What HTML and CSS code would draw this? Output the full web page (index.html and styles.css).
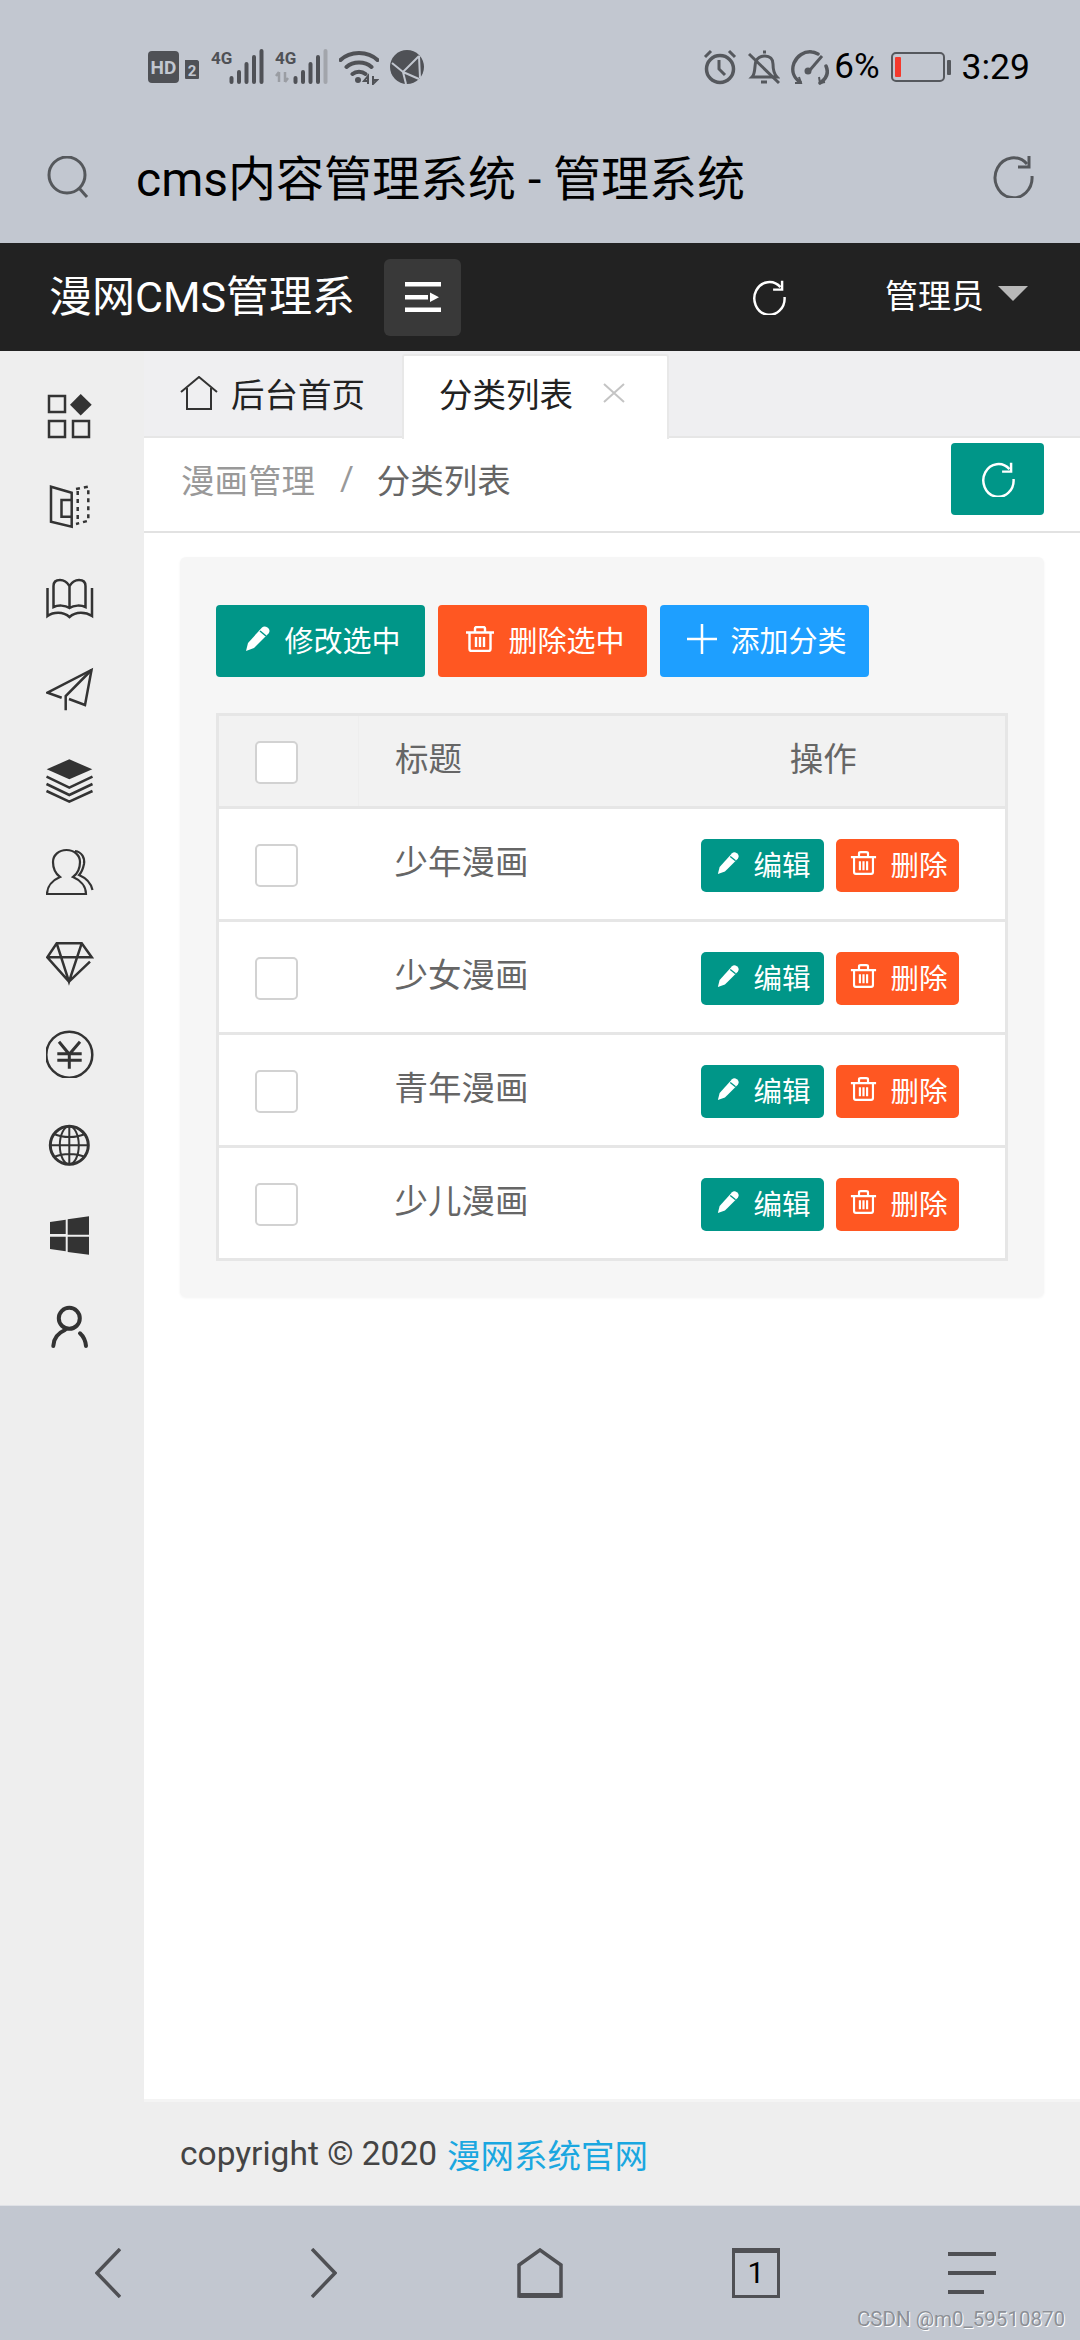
FILE: index.html
```html
<!DOCTYPE html>
<html lang="zh-CN">
<head>
    <meta charset="UTF-8">
    <meta name="viewport" content="width=device-width, initial-scale=1.0">
    <title>cms内容管理系统 - 管理系统</title>
    <link rel="stylesheet" href="styles.css">
</head>
<body>
    <svg class="defs" aria-hidden="true">
        <symbol id="i-reload" viewBox="0 0 44 44">
            <path d="M36 10A18.5 20 0 1 0 41 22" fill="none" stroke="currentColor" stroke-width="3"/>
            <path d="M38 2V13H27" fill="none" stroke="currentColor" stroke-width="3"/>
        </symbol>
        <symbol id="i-pencil" viewBox="0 0 26 26">
            <path d="M1 25L3 17L17 1.5C18.5 0 20.5 0 22.5 1.5C25 3.5 25 5.5 23.5 7.5L9 22Z" fill="currentColor"/>
            <path d="M15 5L21 10" stroke="#009688" stroke-width="1.5"/>
        </symbol>
        <symbol id="i-trash" viewBox="0 0 30 26">
            <path d="M1 6.5H29M10 6V2.5C10 1.5 11 1 12 1H18C19 1 20 1.5 20 2.5V6M4.500 7V23C4.500 24 5.500 25 6.500 25H23.500C24.500 25 25.500 24 25.500 23V7M11 11V21M15 11V21M19 11V21" fill="none" stroke="currentColor" stroke-width="2.400"/>
        </symbol>
    </svg>

    <div class="top">
        <div class="status">
            <div class="status-left">
                <svg width="52" height="36" viewBox="0 0 52 36">
                    <rect x="0" y="2" width="31" height="32" rx="4" fill="#4f5156"/>
                    <text x="15.500" y="25" class="st-hd">HD</text>
                    <path d="M37 11H49C50 11 51 12 51 13V29C51 30 50 30 49 30H39C38 30 37 30 37 29Z" fill="#4f5156"/>
                    <text x="44" y="27" class="st-sim">2</text>
                </svg>
                <svg width="53" height="36" viewBox="0 0 53 36">
                    <text x="0" y="15" class="st-4g">4G</text>
                    <g stroke="#4f5156" stroke-width="4" stroke-linecap="round">
                        <path d="M20.500 29V33M28 23V33M35.500 15V33M43 8V33M50.500 2V33"/>
                    </g>
                </svg>
                <svg width="53" height="36" viewBox="0 0 53 36">
                    <text x="0" y="15" class="st-4g">4G</text>
                    <path d="M4 33V23M4 23L1 27M10 23V33M10 33L13 29" stroke="#9a9da3" stroke-width="2.500" fill="none"/>
                    <g stroke="#4f5156" stroke-width="4" stroke-linecap="round">
                        <path d="M20.500 29V33M28 23V33M35.500 15V33M43 8V33"/>
                    </g>
                    <path d="M50.500 2V33" stroke="#a2a5ab" stroke-width="4" stroke-linecap="round"/>
                </svg>
                <svg width="40" height="36" viewBox="0 0 40 36">
                    <path d="M1.500 11C11 1.500 29 1.500 38.500 11M7.500 18C14 12 26 12 32.500 18M13.500 25C17 22 23 22 26.500 25" fill="none" stroke="#4f5156" stroke-width="4" stroke-linecap="round"/>
                    <circle cx="19" cy="31" r="3" fill="#4f5156"/>
                    <path d="M29 35V27L25 32H29M34 27V35L38 31H34" fill="none" stroke="#4f5156" stroke-width="2"/>
                </svg>
                <svg width="34" height="36" viewBox="0 0 34 36">
                    <circle cx="17" cy="18" r="17" fill="#4f5156"/>
                    <path d="M2 14L13 23L29 7M13 23L16 35M13 23L29 30M29 7L30 29" fill="none" stroke="#c2c7d0" stroke-width="2"/>
                </svg>
            </div>
            <div class="status-right">
                <svg width="34" height="36" viewBox="0 0 34 36">
                    <circle cx="17" cy="20" r="13.500" fill="none" stroke="#55585d" stroke-width="3.500"/>
                    <path d="M16 11V20L22 26M2 8L8 2M32 8L26 2" fill="none" stroke="#55585d" stroke-width="3"/>
                </svg>
                <svg width="32" height="36" viewBox="0 0 32 36">
                    <path d="M4 28C8 24 6 17 8 12C10 8 13 7 17 7C22 7 25 10 25 15C25 21 26 25 29 28H4ZM13 33H19M15 3H18" fill="none" stroke="#55585d" stroke-width="3"/>
                    <path d="M1 5L31 34" stroke="#55585d" stroke-width="3"/>
                </svg>
                <svg width="38" height="36" viewBox="0 0 38 36">
                    <path d="M9 33C3 29 0 22 3 14C6 7 13 2 21 3C23 3 25 4 27 5M35 17C38 24 35 30 29 34" fill="none" stroke="#55585d" stroke-width="3.500" stroke-linecap="round"/>
                    <path d="M31 7L19 21" stroke="#55585d" stroke-width="3"/>
                    <circle cx="17" cy="22" r="3.500" fill="#55585d"/>
                    <path d="M8 28L10 34L4 34M28 28L29 34L34 33" fill="none" stroke="#55585d" stroke-width="2"/>
                </svg>
                <span class="pct">6%</span>
                <svg class="batt" width="60" height="30" viewBox="0 0 60 30">
                    <rect x="1" y="1" width="52" height="28" rx="4" fill="none" stroke="#55585d" stroke-width="2"/>
                    <rect x="4" y="5" width="6" height="20" rx="1" fill="#f4392d"/>
                    <rect x="56" y="8" width="4" height="15" rx="1" fill="#55585d"/>
                </svg>
                <span class="clock">3:29</span>
            </div>
        </div>
        <div class="addr">
            <svg class="addr-search" width="42" height="42" viewBox="0 0 42 42">
                <circle cx="20" cy="19" r="18" fill="none" stroke="#55585c" stroke-width="3"/>
                <path d="M32 32L40 41" stroke="#55585c" stroke-width="3"/>
            </svg>
            <span class="addr-text">cms内容管理系统 - 管理系统</span>
            <svg class="addr-reload" width="44" height="44"><use href="#i-reload"/></svg>
        </div>
    </div>

    <div class="header">
        <span class="brand">漫网CMS管理系</span>
        <div class="flex-btn">
            <svg width="36" height="30" viewBox="0 0 36 30">
                <path d="M0 0H36V4.500H0ZM0 13H23V17.500H0ZM0 25.500H36V30H0Z" fill="#fff"/>
                <path d="M25 10.500L34 15.300L25 20Z" fill="#fff"/>
            </svg>
        </div>
        <svg class="head-reload" width="36" height="36"><use href="#i-reload"/></svg>
        <span class="admin">管理员</span>
        <span class="caret"></span>
    </div>

    <div class="body">
        <div class="side">
            <div class="side-item"><svg width="48" height="48" viewBox="0 0 48 48" fill="none" stroke="#333" stroke-width="2.500">
                <rect x="3" y="4" width="16" height="16"/><rect x="3" y="29" width="16" height="16"/><rect x="27" y="29" width="16" height="16"/>
                <path d="M34.700 2L45.700 12.700L34.700 23.500L24 12.700Z" fill="#333" stroke="none"/>
            </svg></div>
            <div class="side-item"><svg width="48" height="48" viewBox="0 0 48 48" fill="none" stroke="#333" stroke-width="2.500">
                <path d="M25.700 9.700L5 3.700V38.700L25.700 43.700Z"/>
                <path d="M25.700 17H15.500V33.700H25.700"/>
                <path d="M30 6L42.300 3.700V37.700L30 41M31.700 8V40" stroke-dasharray="4 4"/>
            </svg></div>
            <div class="side-item"><svg width="48" height="48" viewBox="0 0 48 48" fill="none" stroke="#333" stroke-width="2.500">
                <path d="M23.500 12C21 8 17 6 14 6C10 6 7.500 8 7.500 12V33C12 31 19 31 23.500 34C28 31 35 31 39.500 33V12C39.500 8 37 6 33 6C30 6 26 8 23.500 12V34"/>
                <path d="M1.500 14V42C7 38 17 37 23.500 43C30 37 40 38 46 42V14"/>
            </svg></div>
            <div class="side-item"><svg width="48" height="48" viewBox="0 0 48 48" fill="none" stroke="#333" stroke-width="2.500">
                <path d="M15.700 32.700L1.500 27.700L45.500 5L39 40L23 34"/>
                <path d="M45.500 5L19.700 31V45.300"/>
            </svg></div>
            <div class="side-item"><svg width="48" height="48" viewBox="0 0 48 48" fill="none" stroke="#333" stroke-width="2.500">
                <path d="M23.300 3.300L46.300 13.300L23.300 23.300L0.700 13.300Z" fill="#333" stroke="none"/>
                <path d="M0.500 20.700L23.300 31.700L46.500 20.700M0.500 28L23.300 39L46.500 28M0.500 35L23.300 45.700L46.500 35"/>
            </svg></div>
            <div class="side-item"><svg width="48" height="48" viewBox="0 0 48 48" fill="none" stroke="#333" stroke-width="2.200">
                <path d="M1 46H40C40 38 34 32 27 29C31 26 34 20 34 14C34 7 28 2 20.500 2C13 2 7 7 7 14C7 20 10 26 14 29C7 32 1 38 1 46Z"/>
                <path d="M29 3C36 4 39 10 38 16C37 21 35 25 33 27C40 30 45 35 46.500 42"/>
            </svg></div>
            <div class="side-item"><svg width="48" height="48" viewBox="0 0 48 48" fill="none" stroke="#333" stroke-width="2.500">
                <path d="M23 42.700L1.300 18.300L10.700 4.300H35.700L45.700 18.300H1.300M10.700 4.300L23 42.700L35.700 4.300M23 42.700L44 22.700"/>
            </svg></div>
            <div class="side-item"><svg width="48" height="48" viewBox="0 0 48 48" fill="none" stroke="#333" stroke-width="2.500">
                <circle cx="23.300" cy="24.700" r="23"/>
                <path d="M13 11.700L23.300 24.300L34 11.700M11.300 23.700H35.700M11.300 30.300H35.700M23.300 24V38.700" stroke-width="3"/>
            </svg></div>
            <div class="side-item"><svg width="48" height="48" viewBox="0 0 48 48" fill="none" stroke="#333" stroke-width="2">
                <circle cx="23.300" cy="24.300" r="19" stroke-width="3"/>
                <ellipse cx="23.300" cy="24.300" rx="9.500" ry="19"/>
                <path d="M23.300 5V43.500M4.300 24.300H42.300M8 13C17 17 30 17 39 13M8 36C17 32 30 32 39 36"/>
            </svg></div>
            <div class="side-item"><svg width="48" height="48" viewBox="0 0 48 48" fill="#333">
                <path d="M4 10L19.700 7.700V22H4ZM21.700 7.300L43 4.300V22.700H21.700ZM4 24.700H19.700V39.300L4 37ZM21.700 24.700H43V42.700L21.700 40Z"/>
            </svg></div>
            <div class="side-item"><svg width="48" height="48" viewBox="0 0 48 48" fill="none" stroke="#333" stroke-width="4" stroke-linecap="round">
                <circle cx="23.300" cy="15.300" r="10.500"/>
                <path d="M7.300 43C7.500 36 12 30 19 27M34 30.300C37 33 39.500 38 40 43"/>
            </svg></div>
        </div>

        <div class="main">
            <div class="tabs">
                <div class="tab">
                    <svg width="38" height="34" viewBox="0 0 38 34" fill="none" stroke="#333" stroke-width="2">
                        <path d="M1 16L19 1L37 16M7 12V33H31V12"/>
                    </svg>
                    <span>后台首页</span>
                </div>
                <div class="tab tab-on">
                    <span>分类列表</span>
                    <svg width="22" height="20" viewBox="0 0 22 20" stroke="#c4c4c4" stroke-width="2">
                        <path d="M1 1L21 19M21 1L1 19"/>
                    </svg>
                </div>
            </div>

            <div class="crumb">
                <span class="crumb-a">漫画管理</span>
                <span class="crumb-sep">/</span>
                <span class="crumb-b">分类列表</span>
                <a class="crumb-btn"><svg width="36" height="36"><use href="#i-reload"/></svg></a>
            </div>

            <div class="content">
                <div class="card">
                    <div class="toolbar">
                        <a class="btn btn-teal"><svg width="26" height="26"><use href="#i-pencil"/></svg>修改选中</a>
                        <a class="btn btn-red"><svg width="30" height="26"><use href="#i-trash"/></svg>删除选中</a>
                        <a class="btn btn-blue"><svg width="30" height="30" viewBox="0 0 30 30" stroke="#fff" stroke-width="2.500"><path d="M0 15H30M15 0V30"/></svg>添加分类</a>
                    </div>
                    <table class="list">
                        <thead>
                            <tr><th class="col-check"><span class="check"></span></th><th class="col-title">标题</th><th class="col-op">操作</th></tr>
                        </thead>
                        <tbody>
                            <tr>
                                <td><span class="check"></span></td><td class="col-title">少年漫画</td>
                                <td class="ops"><a class="mini btn-teal"><svg width="23" height="23"><use href="#i-pencil"/></svg>编辑</a><a class="mini btn-red"><svg width="27" height="24"><use href="#i-trash"/></svg>删除</a></td>
                            </tr>
                            <tr>
                                <td><span class="check"></span></td><td class="col-title">少女漫画</td>
                                <td class="ops"><a class="mini btn-teal"><svg width="23" height="23"><use href="#i-pencil"/></svg>编辑</a><a class="mini btn-red"><svg width="27" height="24"><use href="#i-trash"/></svg>删除</a></td>
                            </tr>
                            <tr>
                                <td><span class="check"></span></td><td class="col-title">青年漫画</td>
                                <td class="ops"><a class="mini btn-teal"><svg width="23" height="23"><use href="#i-pencil"/></svg>编辑</a><a class="mini btn-red"><svg width="27" height="24"><use href="#i-trash"/></svg>删除</a></td>
                            </tr>
                            <tr>
                                <td><span class="check"></span></td><td class="col-title">少儿漫画</td>
                                <td class="ops"><a class="mini btn-teal"><svg width="23" height="23"><use href="#i-pencil"/></svg>编辑</a><a class="mini btn-red"><svg width="27" height="24"><use href="#i-trash"/></svg>删除</a></td>
                            </tr>
                        </tbody>
                    </table>
                </div>
            </div>

            <div class="foot">copyright © 2020 <a class="foot-link">漫网系统官网</a></div>
        </div>
    </div>

    <div class="bottom">
        <svg width="26" height="50" viewBox="0 0 26 50" fill="none" stroke="#4f5054" stroke-width="3.500"><path d="M25 1L2 25L25 49"/></svg>
        <svg width="26" height="50" viewBox="0 0 26 50" fill="none" stroke="#4f5054" stroke-width="3.500"><path d="M1 1L24 25L1 49"/></svg>
        <svg width="46" height="50" viewBox="0 0 46 50" fill="none" stroke="#4f5054" stroke-width="3.500"><path d="M2 17L23 2L44 17V48H2Z"/><path d="M2 47.500H44" stroke-width="5"/></svg>
        <div class="tab-count">1</div>
        <svg width="48" height="42" viewBox="0 0 48 42" fill="#4f5054"><path d="M0 0H48V4H0ZM0 19H48V23H0ZM0 38H36V42H0Z"/></svg>
        <span class="mark">CSDN @m0_59510870</span>
    </div>
</body>
</html>
```

FILE: styles.css
```css
* {
    box-sizing: border-box;
}
html, body {
    margin: 0;
    padding: 0;
}
body {
    width: 1080px;
    height: 2340px;
    display: flex;
    flex-direction: column;
    overflow: hidden;
    font-family: Roboto, "Noto Sans CJK SC", sans-serif;
    background: #fff;
    color: #333;
}
a {
    text-decoration: none;
}
svg {
    display: block;
    flex-shrink: 0;
}
.defs {
    position: absolute;
    width: 0;
    height: 0;
}

/* phone status bar + browser address bar */
.top {
    height: 243px;
    background: #c2c7d0;
}
.status {
    height: 134px;
    display: flex;
    align-items: center;
    justify-content: space-between;
    padding: 0 50px 0 148px;
}
.status-left {
    display: flex;
    align-items: center;
    gap: 11px;
}
.status-right {
    display: flex;
    align-items: center;
    gap: 11px;
    color: #000;
}
.st-hd {
    font: bold 19px Roboto, sans-serif;
    fill: #c2c7d0;
    text-anchor: middle;
}
.st-sim {
    font: bold 15px Roboto, sans-serif;
    fill: #c2c7d0;
    text-anchor: middle;
}
.st-4g {
    font: bold 17px Roboto, sans-serif;
    fill: #4f5156;
}
.pct {
    font-size: 35px;
    line-height: 40px;
    margin-left: -6px;
}
.clock {
    font-size: 35.500px;
    line-height: 40px;
}
.addr {
    height: 86px;
    display: flex;
    align-items: center;
    padding: 0 45px 0 47px;
}
.addr-text {
    flex: 1;
    margin-left: 47px;
    padding-top: 5px;
    font-size: 48px;
    line-height: 60px;
    color: #000;
}
.addr-reload {
    margin-top: -3px;
    color: #55585c;
}

/* dark header */
.header {
    height: 108px;
    background: #222;
    color: #fff;
    display: flex;
    align-items: center;
    padding-left: 49px;
}
.brand {
    width: 335px;
    font-size: 43px;
    line-height: 50px;
    white-space: nowrap;
}
.flex-btn {
    width: 77px;
    height: 77px;
    background: #393939;
    border-radius: 6px;
    display: flex;
    align-items: center;
    justify-content: center;
}
.head-reload {
    margin-left: 290px;
    color: #fff;
}
.admin {
    margin-left: 98px;
    font-size: 33px;
    line-height: 40px;
}
.caret {
    margin: -8px 0 0 14px;
    border-style: solid;
    border-width: 15px 15px 0;
    border-color: #b8b8b8 transparent transparent;
}

.body {
    flex: 1;
    display: flex;
    min-height: 0;
}
.side {
    width: 144px;
    background: #eee;
    padding: 19px 5px 0 0;
}
.side-item {
    height: 91.200px;
    display: flex;
    align-items: center;
    justify-content: center;
}
.main {
    flex: 1;
    display: flex;
    flex-direction: column;
    min-width: 0;
}

/* tabs */
.tabs {
    height: 87px;
    padding-top: 3px;
    display: flex;
    background: #efeff1;
    border-bottom: 2px solid #e6e6e6;
}
.tab {
    width: 258px;
    height: 85px;
    padding: 0 0 8px 36px;
    display: flex;
    align-items: center;
    gap: 13px;
    font-size: 33.500px;
    color: #222;
}
.tab-on {
    width: 267px;
    padding: 0 0 10px 35px;
    gap: 30px;
    background: #fff;
    border: 2px solid #e8e8e8;
    border-bottom: none;
    border-radius: 3px 3px 0 0;
}

/* breadcrumb */
.crumb {
    height: 95px;
    display: flex;
    align-items: center;
    padding: 0 0 12px 37px;
    font-size: 33.500px;
    border-bottom: 2px solid #e2e2e2;
}
.crumb-a {
    color: #999;
}
.crumb-sep {
    margin: 0 23px 0 25px;
    color: #999;
}
.crumb-b {
    color: #666;
}
.crumb-btn {
    margin: 0 36px 0 auto;
    width: 93px;
    height: 72px;
    background: #009688;
    border-radius: 4px;
    color: #fff;
    display: flex;
    align-items: center;
    justify-content: center;
}

.content {
    flex: 1;
    padding: 24px 36px 0;
}
.card {
    background: #f6f6f6;
    border-radius: 6px;
    padding: 48px 36px 36px;
    box-shadow: 0 1px 3px rgba(0, 0, 0, 0.05);
}
.toolbar {
    display: flex;
    gap: 13px;
}
.btn {
    width: 209px;
    height: 72px;
    display: flex;
    align-items: center;
    justify-content: center;
    gap: 13px;
    padding: 0 0 4px 5px;
    font-size: 29px;
    color: #fff;
    border-radius: 4px;
}
.btn-teal {
    background: #009688;
    color: #fff;
}
.btn-red {
    background: #ff5722;
    color: #fff;
}
.btn-blue {
    background: #1e9fff;
    color: #fff;
}

/* table */
.list {
    width: 792px;
    margin-top: 36px;
    table-layout: fixed;
    border-collapse: collapse;
    background: #fff;
    font-size: 33.500px;
    color: #666;
}
.list th, .list td {
    padding: 2px 0 0;
    border-top: 3px solid #e6e6e6;
    border-bottom: 3px solid #e6e6e6;
    font-weight: normal;
}
.list th:first-child, .list td:first-child {
    border-left: 3px solid #e6e6e6;
    padding-left: 36px;
}
.list th:last-child, .list td:last-child {
    border-right: 3px solid #e6e6e6;
}
.list thead tr {
    height: 93px;
    background: #f2f2f2;
}
.list tbody tr {
    height: 113px;
}
.col-check {
    width: 141px;
    border-right: 1px solid #eee;
}
.col-title {
    width: 280px;
    padding: 0 0 9px 36px !important;
    text-align: left;
}
.col-op {
    text-align: center;
    padding: 0 0 9px 3px !important;
}
.check {
    display: block;
    width: 43px;
    height: 43px;
    background: #fff;
    border: 2px solid #d2d2d2;
    border-radius: 5px;
}
.ops {
    padding-left: 62px !important;
}
.ops .mini {
    vertical-align: middle;
}
.mini {
    display: inline-flex;
    align-items: center;
    justify-content: center;
    gap: 13px;
    width: 123px;
    height: 53px;
    margin-right: 12px;
    padding: 0 0 4px 4px;
    font-size: 28.500px;
    border-radius: 5px;
}

/* footer */
.foot {
    height: 106px;
    padding: 0 0 0 36px;
    background: #eee;
    border-top: 3px solid #f4f4f4;
    display: flex;
    align-items: center;
    gap: 10px;
    font-size: 33.500px;
    color: #444;
}
.foot-link {
    color: #1aa7e0;
}

/* browser bottom bar */
.bottom {
    position: relative;
    height: 135px;
    background: #c2c7d0;
    display: grid;
    grid-template-columns: repeat(5, 216px);
    justify-items: center;
    align-items: center;
    padding-bottom: 1px;
    border-top: 1px solid #dfe1e6;
}
.tab-count {
    width: 48px;
    height: 50px;
    border: 3.500px solid #4f5054;
    border-top-width: 5px;
    color: #000;
    font-size: 30px;
    line-height: 40px;
    text-align: center;
}
.mark {
    position: absolute;
    right: 15px;
    bottom: 9px;
    font-size: 20.500px;
    line-height: 24px;
    color: #8d9096;
    text-shadow: 1px 1px 0 #fff;
}
```
